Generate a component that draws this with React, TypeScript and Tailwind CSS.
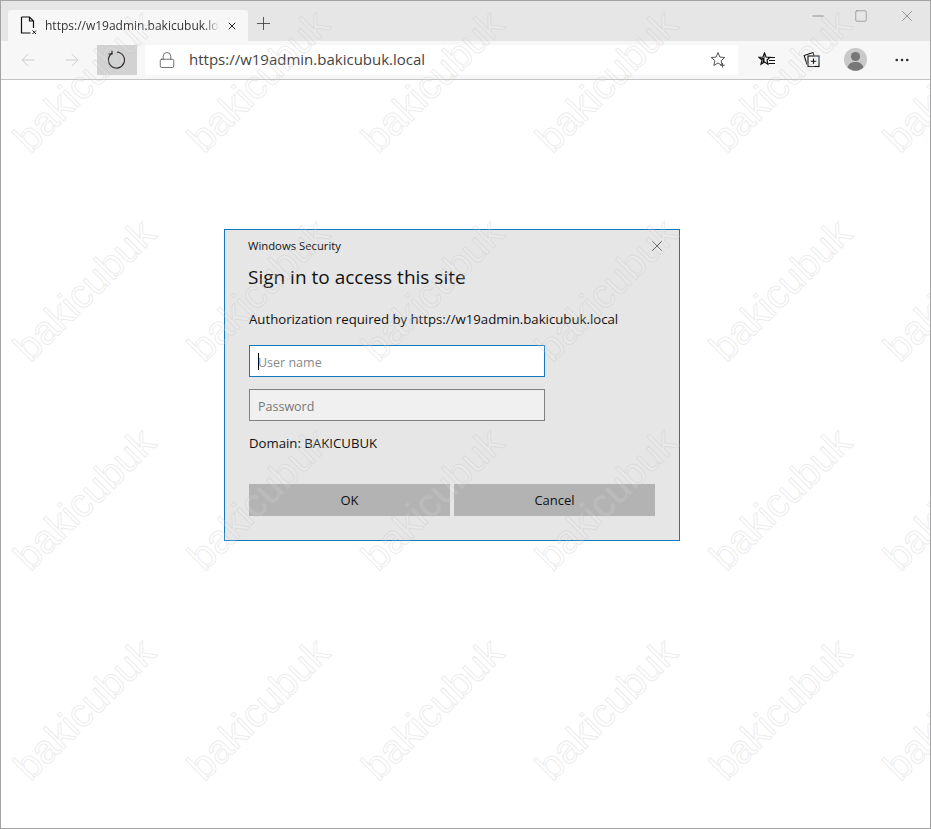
import { Lock, Plus, X, Minus, Square, ArrowLeft, ArrowRight, MoreHorizontal } from "lucide-react";

const font = "font-['Open_Sans','Noto_Sans',sans-serif]";

const marksX = [83, 257, 431, 605, 779, 953];
const marksY = [80, 289, 498, 708];

function Watermarks() {
  return (
    <div className="absolute inset-0 overflow-hidden pointer-events-none">
      {marksY.map((y) =>
        marksX.map((x) => (
          <span
            key={`${x}-${y}`}
            className="absolute font-['Liberation_Sans',sans-serif] text-[40px] leading-none text-white/10 [-webkit-text-stroke:1px_rgba(190,190,190,0.3)] -rotate-45 -translate-x-1/2 -translate-y-1/2 whitespace-nowrap"
            style={{ left: x, top: y }}
          >
            bakicubuk
          </span>
        ))
      )}
    </div>
  );
}

function PageIcon() {
  return (
    <svg width="18" height="20" viewBox="0 0 18 20" fill="none" stroke="#111" strokeWidth="1.2">
      <path d="M1.5 1v16h9M1.5 1h8l4 4v7M9.500 1v4h4" />
      <path d="M12.500 14.500l3.500 3.500M16 14.500l-3.500 3.500" strokeWidth="1" />
    </svg>
  );
}

function RefreshIcon() {
  return (
    <svg width="20" height="20" viewBox="0 0 20 20" fill="none" stroke="#222" strokeWidth="1.1" className="-ml-[2px]">
      <path d="M6.200 3.300A8 8 0 1 0 11 2.100" />
      <path d="M6 0.800v3.200H2.500" />
    </svg>
  );
}

function FavStarIcon() {
  return (
    <svg width="17" height="17" viewBox="0 0 17 17" fill="none" stroke="#555" strokeWidth="1">
      <path d="M8 1.500l1.900 4.600 4.900.4-3.700 3.200 1.100 4.800L8 12l-4.200 2.500 1.100-4.800L1.200 6.500l4.900-.4z" />
      <path d="M12.500 12v4.500M10.200 14.200h4.600" fill="none" />
    </svg>
  );
}

function FavListIcon() {
  return (
    <svg width="18" height="16" viewBox="0 0 18 16" fill="none" stroke="#111" strokeWidth="1.2">
      <path d="M6.500 1l1.500 4 4 .3-3 2.700.9 4.200-3.400-2.200L3 12.200 4 8 1 5.300l4-.3z" />
      <path d="M6.500 2.500L5.500 6 2.500 6l2.500 2-.8 3 2.300-1.500z" fill="#111" stroke="none" />
      <path d="M10 5.500h7M11 8.500h6M10.500 11.500h6.500" />
    </svg>
  );
}

function CollectionsIcon() {
  return (
    <svg width="17" height="17" viewBox="0 0 17 17" fill="none" stroke="#111" strokeWidth="1.1">
      <path d="M4 13.500L1.200 4.500 10 1.500l1 3" />
      <rect x="5" y="5" width="11" height="10.500" fill="#f7f7f7" />
      <path d="M10.500 7.500v5.500M7.700 10.200h5.600" />
    </svg>
  );
}

function Avatar() {
  return (
    <svg width="23" height="23" viewBox="0 0 23 23">
      <circle cx="11.500" cy="11.500" r="11.500" fill="#c9c9c9" />
      <circle cx="11.500" cy="8.500" r="4.600" fill="#777" />
      <path d="M3.600 19.500c1-4 4-5.500 7.900-5.500s6.900 1.500 7.900 5.500a11.500 11.500 0 0 1-15.800 0z" fill="#777" />
    </svg>
  );
}

export default function App() {
  return (
    <div className={`relative w-[931px] h-[829px] flex flex-col bg-white border border-[#a3a3a3] overflow-hidden ${font}`}>
      <div className="h-[40px] shrink-0 bg-[#e6e6e6] flex items-end pl-[7px]">
        <div className="w-[240px] h-[31px] bg-[#f7f7f7] rounded-t-[3px] flex items-center pl-[12px] pr-[10px]">
          <PageIcon />
          <span className="ml-[7px] w-[174px] overflow-hidden whitespace-nowrap text-[12px] text-[#333] [mask-image:linear-gradient(to_right,black_92%,transparent)]">
            https://w19admin.bakicubuk.local
          </span>
          <X size={12} strokeWidth={2} className="ml-auto text-[#222]" />
        </div>
        <div className="h-[31px] ml-[5px] mb-[2px] flex items-center">
          <Plus size={21} strokeWidth={1} className="text-[#444]" />
        </div>
        <div className="ml-auto self-start h-[29px] flex items-center text-[#777]">
          <Minus size={18} strokeWidth={1} />
          <Square size={14} strokeWidth={1} className="ml-[27px]" />
          <X size={18} strokeWidth={1} className="ml-[30px] mr-[14px]" />
        </div>
      </div>

      <div className="h-[39px] shrink-0 bg-[#f7f7f7] border-b border-[#c4c4c4] flex items-center pl-[17px] pb-[1px]">
        <ArrowLeft size={20} strokeWidth={1} className="text-[#c6c6c6]" />
        <ArrowRight size={20} strokeWidth={1} className="ml-[24px] text-[#c6c6c6]" />
        <div className="ml-[15px] w-[40px] h-[30px] bg-[#d2d2d2] flex items-center justify-center">
          <RefreshIcon />
        </div>
        <div className="ml-[8px] w-[593px] h-[30px] bg-white rounded-[2px] flex items-center pl-[13px] pr-[11px]">
          <Lock size={18} strokeWidth={1} className="text-[#444]" />
          <span className="ml-[13px] text-[15px] text-[#444]">https://w19admin.bakicubuk.local</span>
          <span className="ml-auto"><FavStarIcon /></span>
        </div>
        <span className="ml-[20px]"><FavListIcon /></span>
        <span className="ml-[27px]"><CollectionsIcon /></span>
        <span className="ml-[24px]"><Avatar /></span>
        <MoreHorizontal size={18} strokeWidth={1.4} className="ml-[26px] text-[#222]" />
      </div>

      <main className="flex-1 pt-[149px] pl-[223px]">
        <div className="w-[456px] h-[312px] bg-[#e6e6e6] border border-[#1379bd] pl-[23px] pr-[24px] flex flex-col">
          <div className="flex items-center justify-between h-[30px] pt-[2px]">
            <span className="text-[11.3px] text-[#111]">Windows Security</span>
            <X size={18} strokeWidth={1} className="text-[#222] -mr-[11px]" />
          </div>
          <h1 className="mt-[1px] text-[19px] leading-[32px] text-[#111]">Sign in to access this site</h1>
          <p className="mt-[16px] pl-px text-[13.2px] leading-[20px] text-[#111]">Authorization required by https://w19admin.bakicubuk.local</p>
          <div className="mt-[16px] ml-px w-[296px] h-[32px] bg-white border border-[#1379bd] flex items-center pl-[8px] pt-[5px] text-[12.5px] text-[#8a8a8a]">
            <span className="w-px h-[17px] -mt-[5px] -mr-px bg-black" />
            <span>User name</span>
          </div>
          <div className="mt-[12px] ml-px w-[296px] h-[32px] bg-[#f0f0f0] border border-[#808080] flex items-center pl-[8px] pt-[5px] text-[12.5px] text-[#777]">
            Password
          </div>
          <p className="mt-[12px] pl-px text-[13.2px] leading-[20px] text-[#111]">Domain: BAKICUBUK</p>
          <div className="mt-[31px] ml-px flex gap-[4px]">
            <button className="w-[201px] h-[32px] pt-px bg-[#b3b3b3] text-[13px] text-[#111]">OK</button>
            <button className="w-[201px] h-[32px] pt-px bg-[#b3b3b3] text-[13px] text-[#111]">Cancel</button>
          </div>
        </div>
      </main>

      <Watermarks />
    </div>
  );
}
